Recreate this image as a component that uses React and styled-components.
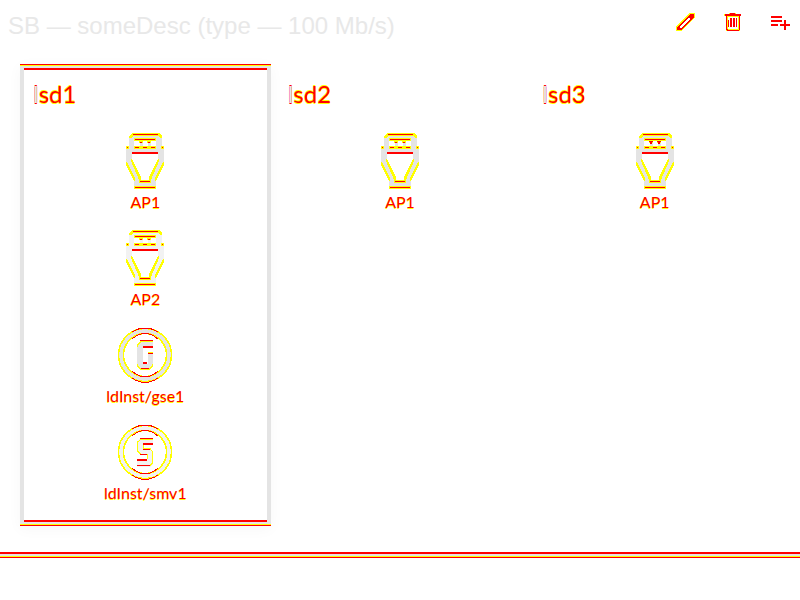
import React from "react";
import styled, { createGlobalStyle } from "styled-components";

const RED = "#ff0000";
const YELLOW = "#ffff00";
const GREY = "#e4e4e4";

const bottomEdge = `linear-gradient(${RED} 0 2px, ${GREY} 2px 4px, ${YELLOW} 4px 5px, ${RED} 5px 6px)`;
const topEdge = `linear-gradient(${RED} 0 1px, ${YELLOW} 1px 2px, ${GREY} 2px 4px, ${RED} 4px 6px)`;

const GlobalStyle = createGlobalStyle`
  * { box-sizing: border-box; }
  body { margin: 0; background: #fff; font-family: Lato, "Liberation Sans", sans-serif; }
`;

const Panel = styled.section`
  padding-bottom: 32px;
  background: ${bottomEdge} 0 100% / 100% 6px no-repeat;
  box-shadow: 0 4px 14px rgba(0, 0, 0, 0.03);
`;

const Header = styled.header`
  display: flex;
  justify-content: space-between;
  align-items: flex-start;
  height: 64px;
  padding: 10px 7px 0 8px;
`;

const Title = styled.h1`
  margin: 0;
  color: #e8e8e8;
  font: 400 24px/32px "Liberation Sans", sans-serif;
  white-space: nowrap;
`;

const Actions = styled.nav`
  display: flex;
  gap: 24px;
`;

const IconButton = styled.button`
  display: flex;
  width: 24px;
  height: 24px;
  padding: 0;
  border: 0;
  background: none;
  cursor: pointer;
`;

const Columns = styled.main`
  display: grid;
  grid-template-columns: repeat(3, 1fr);
  gap: 4px;
  padding: 0 20px;
`;

const Card = styled.article`
  padding: 15px 13px 23px;
  ${(p) =>
    p.$selected &&
    `
    background:
      linear-gradient(${GREY}, ${GREY}) 0 50% / 4px calc(100% - 4px) no-repeat,
      linear-gradient(${GREY}, ${GREY}) 100% 50% / 4px calc(100% - 4px) no-repeat,
      ${topEdge} 0 0 / 100% 6px no-repeat,
      ${bottomEdge} 0 100% / 100% 6px no-repeat;
    box-shadow: 0 3px 14px rgba(0, 0, 0, 0.035);
  `}
`;

const CardTitle = styled.h2`
  margin: 0 0 24px;
  color: ${RED};
  font-size: 24px;
  font-weight: 400;
  line-height: 30px;
  text-shadow: 0 1px ${YELLOW}, 0 -1px ${YELLOW};
`;

const Stem = styled.span`
  color: ${GREY};
  text-shadow: 0 1px ${RED}, 0 -1px ${RED};
`;

const Items = styled.ul`
  display: grid;
  gap: 18px;
  margin: 0;
  padding: 0;
  list-style: none;
`;

const Item = styled.li`
  display: flex;
  flex-direction: column;
  align-items: center;
  gap: 2px;
  height: 79px;
  color: ${RED};
  font-size: 16px;
  line-height: 20px;
`;

const Label = styled.span`
  text-shadow: 0 1px ${YELLOW};
`;

const Graphic = styled.svg`
  display: block;
  flex: none;
`;

function PlugIcon({ tone = GREY, tee }) {
  return (
    <Graphic width="56" height="57" viewBox="0 0 56 57" shapeRendering="crispEdges" aria-hidden="true">
      <path
        fill={tone}
        fillRule="evenodd"
        d="M15 0H42L45 3V13H47V31L39 46V56H17V46L9 31V13H12V3ZM17 7V13H39V7ZM15 20V27L23 45V48H33V45L41 27V20Z"
      />
      <g fill={YELLOW}>
        <path d="M12 5V3L15 0H17V2L14 5ZM45 5V3L42 0H40V2L43 5ZM9 13H12V16H9ZM44 13H47V16H44Z" />
        <path d="M9 29H10L18 45V48H17L9 32ZM47 29H46L38 45V48H39L47 32ZM14 26H15L24 44V47H22L14 28ZM42 26H41L32 44V47H34L42 28Z" />
        <path d="M16 0H41V3H16ZM17 5H39V8H17ZM17 13H39V16H17ZM22 47H34V50H22ZM17 53H39V56H17Z" />
      </g>
      <path d="M16 1H41V2H16ZM18 6H38V7H18ZM15 19H41V21H15ZM18 14H22V15H18ZM26 14H30V15H26ZM34 14H38V15H34ZM10 14H11V15H10ZM45 14H46V15H45ZM23 48H33V49H23ZM18 54H38V55H18Z" fill={RED} />
      <path d="M23 8H26V13H23ZM31 8H34V13H31Z" fill={tone} />
      <path d="M22 8H26V10H22ZM30 8H34V10H30Z" fill={YELLOW} />
      <path d={tee ? "M22 8H26V9H25V11H23V9H22ZM30 8H34V9H33V11H31V9H30Z" : "M23 9H25V10H23ZM31 9H33V10H31Z"} fill={RED} />
    </Graphic>
  );
}

function RoundIcon({ kind }) {
  const tone = kind === "goose" ? GREY : "#f2f2f2";
  return (
    <Graphic width="56" height="57" viewBox="0 0 56 57" shapeRendering="crispEdges" aria-hidden="true">
      <g fill="none">
        <circle cx="28" cy="28" r="24" stroke={tone} strokeWidth="6" />
        <circle cx="28" cy="28" r="26.5" stroke={YELLOW} strokeWidth="1.5" />
        <circle cx="28" cy="28" r="21.5" stroke={YELLOW} strokeWidth="1.5" />
        <path d="M15 5Q28-3 41 5M15 51Q28 60 41 51M15 12Q28 1 41 12M15 44Q28 56 41 44" stroke={RED} />
      </g>
      {kind === "goose" ? (
        <g>
          <path fill={tone} d="M24 14H36V20H26V37H31V27H36V39L33 42H23L20 39V18Z" />
          <path d="M36 14.5H24L20.5 18V20M31 25.5H36M26 35.5H30M20.5 37V39L24 42.5H32L35.5 39V37" fill="none" stroke={YELLOW} />
          <path d="M23 13.5H36M31 26.5H36M24 41.5H32" fill="none" stroke={RED} />
          <path d="M26 19H36V21H26ZM26 35H30V37H26Z" fill={RED} />
        </g>
      ) : (
        <g>
          <path fill={tone} d="M23 14H36V20H26V25H33L36 28V40L33 43H20V36H30V31H23L20 28V17Z" />
          <path d="M36 15.5H24L20.5 18V27L24 30.5H30V35M26 20V24.5H33L35.5 28V39L33 41.5H20" fill="none" stroke={YELLOW} />
          <path d="M23 14H36V15H23ZM26 19H36V21H26ZM26 25H33V26H26ZM23 30H30V31H23ZM20 35H30V37H20ZM20 41H33V42H20Z" fill={RED} />
        </g>
      )}
    </Graphic>
  );
}

function ActionIcon({ name }) {
  return (
    <Graphic width="24" height="24" viewBox="0 0 24 24" shapeRendering="crispEdges" aria-hidden="true">
      {name === "Edit" && (
        <>
          <path d="M3 21V16L16 3H22V7L8 21Z" fill={YELLOW} />
          <path d="M4 20V17L17 4H21V7L8 20Z" fill={RED} />
          <path d="M7 17L16 8L17 9L8 18Z" fill="#fff" stroke="#fff" />
        </>
      )}
      {name === "Delete" && (
        <>
          <path d="M8 3H15V4H20V6H19V21H5V6H3V4H8Z" fill={YELLOW} />
          <path d="M7 7H17V19H7Z" fill="#fff" />
          <path d="M9 3H14V4H20V6H4V4H9ZM5 6H6V19L7 20H17L18 19V6H19V20L17 21H7L5 20Z" fill={RED} />
          <path d="M7 10H8V17H7ZM9 8H11V17H9ZM12 8H14V17H12ZM15 8H16V17H15Z" fill={RED} />
        </>
      )}
      {name === "Add to list" && (
        <path d="M2 6H13V8H2ZM2 10H13V12H2ZM2 14H9V16H2ZM15 10H17V14H21V16H17V20H15V16H11V14H15Z" fill={RED} />
      )}
    </Graphic>
  );
}

const actions = ["Edit", "Delete", "Add to list"];

const networks = [
  {
    name: "lsd1",
    selected: true,
    items: [
      { label: "AP1", icon: <PlugIcon /> },
      { label: "AP2", icon: <PlugIcon tone="#f2f2f2" /> },
      { label: "ldInst/gse1", icon: <RoundIcon kind="goose" /> },
      { label: "ldInst/smv1", icon: <RoundIcon kind="sampled" /> },
    ],
  },
  { name: "lsd2", items: [{ label: "AP1", icon: <PlugIcon /> }] },
  { name: "lsd3", items: [{ label: "AP1", icon: <PlugIcon tee /> }] },
];

export default function App() {
  return (
    <>
      <GlobalStyle />
      <Panel>
        <Header>
          <Title>SB — someDesc (type — 100 Mb/s)</Title>
          <Actions>
            {actions.map((name) => (
              <IconButton key={name} type="button" aria-label={name}>
                <ActionIcon name={name} />
              </IconButton>
            ))}
          </Actions>
        </Header>
        <Columns>
          {networks.map(({ name, selected, items }) => (
            <Card key={name} $selected={selected}>
              <CardTitle>
                <Stem>{name[0]}</Stem>
                {name.slice(1)}
              </CardTitle>
              <Items>
                {items.map(({ label, icon }) => (
                  <Item key={label}>
                    {icon}
                    <Label>{label}</Label>
                  </Item>
                ))}
              </Items>
            </Card>
          ))}
        </Columns>
      </Panel>
    </>
  );
}
